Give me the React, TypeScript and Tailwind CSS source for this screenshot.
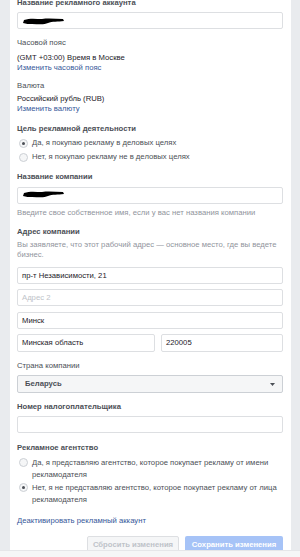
import React from "react";

const F = "font-['Liberation_Sans',Arial,sans-serif]";

function Scribble({ w = 44 }: { w?: number }) {
  return (
    <svg width={w} height="10" viewBox="0 0 44 10" className="block">
      <path
        d="M2 4 C8 2 14 3 20 3 C27 2 34 3 41 3 L42 5 C36 6 30 5 26 7 C22 9 16 8 10 8 C7 8 4 8 1 7 Z"
        fill="#000"
      />
    </svg>
  );
}

function Input({
  children,
  className = "",
}: {
  children?: React.ReactNode;
  className?: string;
}) {
  return (
    <div
      className={`h-[17px] border border-[#dddfe2] rounded-[2px] bg-white flex items-center px-[4px] text-[#1d2129] ${className}`}
    >
      {children}
    </div>
  );
}

function Radio({ checked }: { checked?: boolean }) {
  return (
    <span className="mt-[1px] shrink-0 w-[9px] h-[9px] rounded-full border border-[#ccd0d5] bg-[#f5f6f7] flex items-center justify-center">
      {checked && <span className="w-[3px] h-[3px] rounded-full bg-[#4b4f56]" />}
    </span>
  );
}

export default function App() {
  return (
    <div className={`w-[300px] h-[557px] bg-[#e9ebee] overflow-hidden flex flex-col ${F} text-[7.7px] leading-[10px]`}>
      <div className="h-[550px] flex">
        <div className="w-[10px] shrink-0" />
        <div className="w-[281px] shrink-0 bg-white px-[7px] pr-[8px] overflow-hidden">
          <div className="mt-[-2px] font-bold text-[#4b4f56]">Название рекламного аккаунта</div>
          <Input className="mt-[4px]">
            <Scribble />
          </Input>

          <div className="mt-[9px] text-[#4b4f56]">Часовой пояс</div>
          <div className="mt-[5px] text-[#1d2129]">(GMT +03:00) Время в Москве</div>
          <div className="text-[#365899]">Изменить часовой пояс</div>

          <div className="mt-[8px] text-[#4b4f56]">Валюта</div>
          <div className="mt-[3px] text-[#1d2129]">Российский рубль (RUB)</div>
          <div className="text-[#365899]">Изменить валюту</div>

          <div className="mt-[10px] font-bold text-[#4b4f56]">Цель рекламной деятельности</div>
          <div className="mt-[4px] flex items-start gap-[4px] h-[14px] pl-[2px] text-[#4b4f56]">
            <Radio checked />
            <span>Да, я покупаю рекламу в деловых целях</span>
          </div>
          <div className="flex items-start gap-[4px] h-[14px] pl-[2px] text-[#4b4f56]">
            <Radio />
            <span>Нет, я покупаю рекламу не в деловых целях</span>
          </div>

          <div className="mt-[6px] font-bold text-[#4b4f56]">Название компании</div>
          <Input className="mt-[5px] !items-start">
            <div className="mt-[1px]">
              <Scribble />
            </div>
          </Input>
          <div className="mt-[4px] text-[#90949c]">
            Введите свое собственное имя, если у вас нет названия компании
          </div>

          <div className="mt-[9px] font-bold text-[#4b4f56]">Адрес компании</div>
          <div className="mt-[3px] text-[#90949c]">
            Вы заявляете, что этот рабочий адрес — основное место, где вы ведете бизнес.
          </div>
          <Input className="mt-[7px]">пр-т Независимости, 21</Input>
          <Input className="mt-[5px]">
            <span className="text-[#bec3c9]">Адрес 2</span>
          </Input>
          <Input className="mt-[6px]">Минск</Input>
          <div className="mt-[5px] flex gap-[6px]">
            <Input className="flex-1 h-[18px]">Минская область</Input>
            <Input className="w-[122px] h-[18px]">220005</Input>
          </div>

          <div className="mt-[9px] text-[#4b4f56]">Страна компании</div>
          <div className="mt-[4px] h-[18px] border border-[#ccd0d5] rounded-[2px] bg-[#f5f6f7] flex items-center justify-between pl-[7px] pr-[7px] font-bold text-[#4b4f56]">
            <span>Беларусь</span>
            <svg width="5" height="3" viewBox="0 0 5 3">
              <path d="M0 0 L5 0 L2.5 3 Z" fill="#4b4f56" />
            </svg>
          </div>

          <div className="mt-[9px] font-bold text-[#4b4f56]">Номер налогоплательщика</div>
          <Input className="mt-[4px]" />

          <div className="mt-[10px] font-bold text-[#4b4f56]">Рекламное агентство</div>
          <div className="mt-[4px] flex items-start gap-[4px] pl-[2px] text-[#4b4f56] leading-[12px]">
            <Radio />
            <span>Да, я представляю агентство, которое покупает рекламу от имени рекламодателя</span>
          </div>
          <div className="mt-[1px] flex items-start gap-[4px] pl-[2px] text-[#4b4f56] leading-[12px]">
            <Radio checked />
            <span>Нет, я не представляю агентство, которое покупает рекламу от лица рекламодателя</span>
          </div>

          <div className="mt-[10px] text-[#365899]">Деактивировать рекламный аккаунт</div>

          <div className="mt-[10px] flex justify-end gap-[6px]">
            <div className="w-[92px] h-[17px] rounded-[2px] border border-[#dddfe2] bg-[#f5f6f7] text-[#bec3c9] font-bold flex items-center justify-center">
              Сбросить изменения
            </div>
            <div className="w-[98px] h-[17px] rounded-[2px] bg-[#a6c3f7] text-white font-bold flex items-center justify-center">
              Сохранить изменения
            </div>
          </div>
        </div>
        <div className="flex-1" />
      </div>
      <div className="flex-1 bg-[#f5f6f7] border-t border-[#e5e6e9]" />
    </div>
  );
}
